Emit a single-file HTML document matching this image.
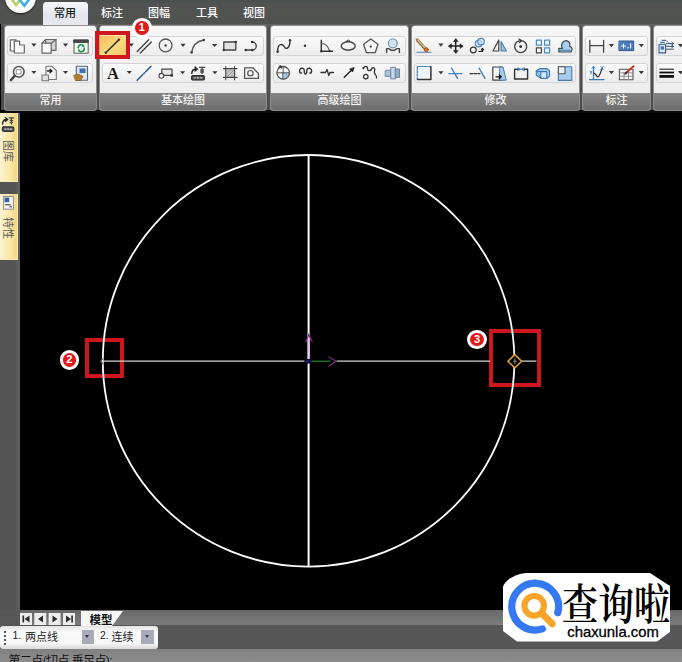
<!DOCTYPE html>
<html><head><meta charset="utf-8">
<style>
html,body{margin:0;padding:0;}
body{width:682px;height:662px;overflow:hidden;background:#000;position:relative;font-family:"Liberation Sans","Noto Sans CJK SC",sans-serif;}
.abs{position:absolute;}
#tabbar{left:0;top:0;width:682px;height:24px;background:linear-gradient(#4a504e,#515351 20%,#505250);}
#ribbon{left:0;top:24px;width:682px;height:86px;background:linear-gradient(#626262,#505050 4px,#4c4c4c);}
.tabtxt{position:absolute;top:6px;font-size:11px;font-weight:500;color:#fff;line-height:14px;white-space:nowrap;}
#acttab{left:43px;top:2px;width:45px;height:23px;background:linear-gradient(#f5f7fa,#e2e6ec 60%,#e6e9ee);border-radius:3.5px 3.5px 0 0;}
.panel{position:absolute;top:26px;height:83.5px;background:linear-gradient(#f6f6f6,#eeeeee 60%);border-radius:2.5px;overflow:hidden;box-shadow:0 0 0 1px #8c8c8c;}
.plabel{position:absolute;left:0;right:0;bottom:0;height:16.5px;background:linear-gradient(#848484,#6e6e6e);color:#f4f4f4;font-size:11px;font-weight:500;line-height:15.5px;text-align:center;}
.grp{position:absolute;height:18px;border:1px solid #d2d4d8;border-radius:3px;background:linear-gradient(#fafafa,#ececec);}
.r1{top:10px}.r2{top:37px}
svg{position:absolute;overflow:visible}
.dd{position:absolute;width:0;height:0;border-left:2.5px solid transparent;border-right:2.5px solid transparent;border-top:3px solid #444;}
.badge{position:absolute;width:13.6px;height:13.6px;border-radius:50%;background:#e0191b;border:3.1px solid #fff;color:#fff;font-size:11px;font-weight:bold;line-height:13.6px;text-align:center;}
.redbox{position:absolute;border:4px solid #cf161d;box-sizing:border-box;}
.sidetab{position:absolute;left:0;width:18px;background:linear-gradient(90deg,#fdf3d0,#fbe7a8 55%,#f5d47a);box-shadow:inset -1px -1px 0 #fbe9b4;}
.vtxt{position:absolute;font-size:11px;color:#5a5a5a;transform-origin:0 0;transform:rotate(90deg);white-space:nowrap;line-height:12px;}
</style></head><body>
<!-- top bars -->
<div id="tabbar" class="abs"></div>
<div id="ribbon" class="abs"></div>
<div class="abs" style="left:0;top:24px;width:1px;height:87px;background:#000"></div>
<div class="abs" style="left:0;top:110px;width:682px;height:3px;background:#0a0a0a"></div>
<!-- app button -->
<div class="abs" style="left:4.8px;top:-18.4px;width:31px;height:31px;border-radius:50%;background:radial-gradient(circle at 50% 55%,#fdfdfb 50%,#e9efe6 80%,#d6dcd8 100%);box-shadow:0 1px 2px #1a1a1a"></div>
<svg class="abs" style="left:8px;top:0" width="26" height="10" viewBox="0 0 26 10"><path d="M3.5 -1 L8 5 L12 -0.5" stroke="#b9d064" stroke-width="2.6" fill="none"/><path d="M11 -1 L16.3 5.6 L21.5 -1" stroke="#3faee0" stroke-width="2.6" fill="none"/></svg>
<div id="acttab" class="abs"></div>
<div class="tabtxt" style="left:54px;color:#222">常用</div>
<div class="tabtxt" style="left:101px">标注</div>
<div class="tabtxt" style="left:148px">图幅</div>
<div class="tabtxt" style="left:196px">工具</div>
<div class="tabtxt" style="left:243px">视图</div>

<!-- panels -->
<div class="panel" id="p1" style="left:5px;width:91px"><div class="grp r1" style="left:2px;width:84px"></div><div class="grp r2" style="left:2px;width:84px"></div><div class="plabel">常用</div></div>
<div class="panel" id="p2" style="left:100px;width:166px"><div class="grp r1" style="left:2px;width:160px"></div><div class="grp r2" style="left:2px;width:160px"></div><div class="plabel">基本绘图</div></div>
<div class="panel" id="p3" style="left:271px;width:137px"><div class="grp r1" style="left:2px;width:131px"></div><div class="grp r2" style="left:2px;width:131px"></div><div class="plabel">高级绘图</div></div>
<div class="panel" id="p4" style="left:412px;width:167px"><div class="grp r1" style="left:2px;width:160px"></div><div class="grp r2" style="left:2px;width:160px"></div><div class="plabel">修改</div></div>
<div class="panel" id="p5" style="left:583px;width:67px"><div class="grp r1" style="left:2px;width:61px"></div><div class="grp r2" style="left:2px;width:61px"></div><div class="plabel">标注</div></div>
<div class="panel" id="p6" style="left:654px;width:40px"><div class="grp r1" style="left:2px;width:50px"></div><div class="grp r2" style="left:2px;width:50px"></div><div class="plabel"></div></div>


<!-- icons -->
<svg class="abs" id="icons" style="left:0;top:0" width="682" height="112" viewBox="0 0 682 112" fill="none" stroke-linecap="round" stroke-linejoin="round">
<defs><linearGradient id="og" x1="0" y1="0" x2="1" y2="1"><stop offset="0" stop-color="#f6b95a"/><stop offset=".55" stop-color="#f9dc82"/><stop offset="1" stop-color="#f4c064"/></linearGradient></defs>
<!-- panel1 row1 -->
<g stroke="#666" stroke-width="1.2" fill="#fbfbfb">
<path d="M10.3 39.8 H16 V51 H10.3 Z"/>
<path d="M14.3 41.2 H19.6 V45 H24.3 V53 H14.3 Z"/>
<path d="M45.6 39.5 H56 V50.3 H45.6 Z" fill="#d4d4d4"/>
<path d="M42 43.2 H51.2 V53.2 H42 Z"/>
<path d="M42 43.2 L45.6 39.5 M51.2 43.2 L56 39.5" />
</g>
<rect x="74" y="40" width="14.2" height="13.2" fill="#f2f4f2" stroke="#666" stroke-width="1.1"/>
<rect x="74" y="40" width="14.2" height="2.4" fill="#444" stroke="#444" stroke-width="1"/>
<path d="M78.2 47.6 A3 3 0 0 1 83.6 46 M84.2 48.2 A3 3 0 0 1 78.8 50.4" stroke="#279a48" stroke-width="1.7"/><path d="M82.6 44.6 L84.6 46.6 L82 47 Z M79.6 51.8 L77.8 49.8 L80.4 49.4 Z" fill="#279a48" stroke="none"/>
<!-- panel1 row2 -->
<circle cx="18.8" cy="71.8" r="5.3" fill="#fafafa" stroke="#555" stroke-width="1.6"/>
<rect x="16.6" y="69.6" width="4.4" height="4.4" fill="#fff" stroke="#888" stroke-width=".9"/>
<path d="M14.6 76 L11 80" stroke="#444" stroke-width="2.6"/>
<g stroke="#777" stroke-width="1.1" fill="#f4f4f4">
<path d="M46 66.3 H52 L56.3 70.5 V79.5 H46 Z"/>
<path d="M42 75 H48.5 V80.8 H42 Z" fill="#e2e2e2"/>
</g>
<path d="M47.5 71 H51.5 M50 69.3 L52 71 L50 72.7" stroke="#222" stroke-width="1.3"/>
<rect x="76.3" y="66.2" width="11.2" height="14" fill="#dfe6ee" stroke="#55667a" stroke-width="1.1"/>
<rect x="79.5" y="68.5" width="6" height="4.5" fill="#3d6fb0" stroke="none"/>
<path d="M74 75.5 L78 74 L83 76.5 L80.5 80.5 L76 80.5 Z" fill="#b57a2c" stroke="#8a5a1c" stroke-width=".8"/>
<!-- panel2 row1 -->
<rect x="99.5" y="35.5" width="27.5" height="20" fill="url(#og)" stroke="none"/>
<path d="M105.8 52.8 L119 39.6" stroke="#3a3428" stroke-width="1.5"/>
<circle cx="105.8" cy="52.8" r="1.2" fill="#3a3428"/><circle cx="119" cy="39.6" r="1.2" fill="#3a3428"/>
<path d="M137.2 51.4 L148.7 39.8 M140.3 53 L151.3 41.9" stroke="#444" stroke-width="1.4"/>
<circle cx="165.6" cy="45.4" r="6.4" stroke="#555" stroke-width="1.3"/><circle cx="165.6" cy="45.4" r="1.2" fill="#333"/>
<path d="M191.6 52.4 Q193 42 203.8 40" stroke="#555" stroke-width="1.4"/>
<circle cx="191.6" cy="52.4" r="1.3" fill="#444"/><circle cx="203.8" cy="40" r="1.3" fill="#444"/>
<rect x="223.8" y="42" width="12" height="8" fill="#e4e4e4" stroke="#444" stroke-width="1.3"/>
<circle cx="235.8" cy="42" r="1.2" fill="#333"/><circle cx="223.8" cy="50" r="1.2" fill="#333"/>
<path d="M245.8 50 H252.5 A4 4 0 0 0 252 42" stroke="#444" stroke-width="1.4"/>
<circle cx="245.8" cy="50" r="1.3" fill="#333"/><circle cx="252.3" cy="50" r="1.3" fill="#333"/><circle cx="252" cy="42" r="1.2" fill="#333"/>
<!-- panel2 row2 -->
<text x="107" y="78.5" font-family="'Liberation Serif',serif" font-weight="bold" font-size="16.5" fill="#1a1a1a" stroke="none">A</text>
<path d="M137.2 80.2 L142.5 74.8 M143.6 73.7 L144.6 72.7 M145.7 71.6 L151 66.3" stroke="#2c5a88" stroke-width="1.5"/>
<rect x="161.8" y="69.2" width="10.2" height="6.2" fill="#e8e8e8" stroke="#444" stroke-width="1.2"/>
<circle cx="161.4" cy="75.8" r="2.4" fill="#f4f4f4" stroke="#444" stroke-width="1.1"/>
<rect x="170.6" y="74.3" width="2.4" height="2.4" fill="#333"/>
<path d="M191.8 73.5 Q191.8 69 196.5 69 M195 67 L197.3 69 L195 71" stroke="#222" stroke-width="1.4"/>
<path d="M199.5 67.3 H204.8 M202.1 67.3 V73.5 M200.7 70 H203.6 M200.7 72 H203.6" stroke="#444" stroke-width="1.3"/>
<rect x="191.5" y="75.5" width="13" height="4.6" rx="1" fill="#444" stroke="#333" stroke-width="1"/>
<path d="M194 77.8 H195.5 M197.2 77.8 H198.8 M200.5 77.8 H202" stroke="#ddd" stroke-width="1.2"/>
<rect x="225.8" y="68.6" width="8.8" height="8.8" fill="#c9c9c9" stroke="none"/>
<path d="M223.5 68.6 H237 M223.5 77.4 H237 M225.8 66.5 V79.8 M234.6 66.5 V79.8" stroke="#444" stroke-width="1.1"/>
<path d="M227 77 L234 70 M227 73.5 L231 69.5 M230.5 77 L234 73.5" stroke="#888" stroke-width=".8"/>
<path d="M244.6 67.8 H253 L258.4 73.5 V78.4 H244.6 Z" fill="#f6f6f6" stroke="#555" stroke-width="1.3"/>
<circle cx="250.4" cy="73.2" r="2.7" stroke="#555" stroke-width="1.2"/>
<path fill="#3a3a3a" stroke="none" d="M31.3 43.6 h5.2 l-2.6 3.1 z M62.9 43.6 h5.2 l-2.6 3.1 z M128.7 43.6 h5.2 l-2.6 3.1 z M180.4 43.8 h5.2 l-2.6 3.1 z M212.0 43.9 h5.2 l-2.6 3.1 z M438.3 43.6 h5.2 l-2.6 3.1 z M608.8 44.1 h5.2 l-2.6 3.1 z M638.7 44.1 h5.2 l-2.6 3.1 z M677.9 44.1 h5.2 l-2.6 3.1 z M31.3 70.9 h5.2 l-2.6 3.1 z M62.9 70.9 h5.2 l-2.6 3.1 z M126.7 71.0 h5.2 l-2.6 3.1 z M180.0 71.2 h5.2 l-2.6 3.1 z M212.3 71.2 h5.2 l-2.6 3.1 z M438.3 71.2 h5.2 l-2.6 3.1 z M608.8 71.1 h5.2 l-2.6 3.1 z M638.7 71.1 h5.2 l-2.6 3.1 z M677.9 71.1 h5.2 l-2.6 3.1 z"/>
<!-- panel3 row1 -->
<path d="M277.6 51.8 C277.6 42 283 44 284.5 47 C286 50 290 48 290 40.2" stroke="#333" stroke-width="1.4"/>
<circle cx="277.6" cy="51.8" r="1.2" fill="#333"/><circle cx="290" cy="40.2" r="1.2" fill="#333"/>
<circle cx="305" cy="45.8" r="1.2" fill="#333"/>
<path d="M321.3 40.3 V51.2 H332.4" stroke="#333" stroke-width="1.4"/>
<path d="M321.3 43.5 Q327.5 43.5 329.5 51" stroke="#555" stroke-width="1.1"/>
<circle cx="321.3" cy="51.2" r="1.2" fill="#333"/><circle cx="329.8" cy="51.2" r="1.1" fill="#333"/>
<ellipse cx="348.2" cy="46" rx="7" ry="4.2" stroke="#444" stroke-width="1.4"/>
<path d="M346.5 41 L348.2 40 L350 41" stroke="#444" stroke-width="1"/>
<path d="M370.8 39 L378 44.3 L375.2 52.7 H366.4 L363.6 44.3 Z" fill="#f6f6f6" stroke="#555" stroke-width="1.3"/>
<circle cx="370.8" cy="46.6" r="1.1" fill="#333"/>
<circle cx="392.8" cy="43.4" r="4.4" fill="#cfe2f3" stroke="#7d95ad" stroke-width="1.2"/>
<path d="M386.6 52.6 V48.6 H388.6 Q392.8 52.5 397 48.6 H399.4 V52.6" stroke="#444" stroke-width="1.4"/>
<!-- panel3 row2 -->
<circle cx="283.2" cy="72.8" r="6.3" fill="#f8f8f8" stroke="#555" stroke-width="1.3"/>
<path d="M283.2 72.8 H289.5 A6.3 6.3 0 0 1 283.2 79.1 Z" fill="#9cc4e4" stroke="#555" stroke-width="1"/>
<path d="M283.2 72.8 V66.5 M277 72.8 H283.2" stroke="#555" stroke-width="1"/>
<path d="M278.5 67.5 L281 66 M279 66 H281.3 V68.2" stroke="#333" stroke-width="1"/>
<path d="M299.6 71.5 C299 67.5 304.5 67 304.3 71 C304 75 306.8 75 306.8 71 C306.5 67 312 67.5 311.6 71.5 M299.6 71.5 Q300 73.5 301.5 73 M311.6 71.5 Q311.2 73.5 309.8 73" stroke="#333" stroke-width="1.4"/>
<path d="M321 72.5 H325.5 L327 69.5 L328.8 75.5 L330 72.5 H333.5" stroke="#333" stroke-width="1.3"/>
<path d="M344.2 77.2 L352.5 69.2" stroke="#222" stroke-width="1.4"/>
<path d="M354 67.8 L352.6 72 L349.8 69.2 Z" fill="#222" stroke="#222" stroke-width=".8"/>
<path d="M363.5 68.5 C364 65.5 368 66 367.5 68.5 C367 71 371 71.5 371.5 69 C372 66.5 376 68 374.5 71 C373 74 377.5 75 376.5 78" stroke="#333" stroke-width="1.3"/>
<circle cx="365.8" cy="76.6" r="2.3" stroke="#333" stroke-width="1.2"/><circle cx="363.3" cy="68" r="1" fill="#333"/>
<g stroke="#6d86a0" stroke-width="1">
<rect x="385.6" y="70.3" width="5.5" height="6" fill="#a9c3dc"/>
<rect x="391.1" y="67.3" width="4.4" height="11.6" fill="#c8d9ea"/>
<rect x="395.5" y="69" width="4" height="8.4" fill="#8fabc6"/>
</g>
<!-- panel4 row1 -->
<path d="M417.3 40 L426 49.5" stroke="#8a6a3a" stroke-width="3.2"/>
<path d="M417.6 39.8 L426 49" stroke="#d9c49a" stroke-width="1.2"/>
<circle cx="426.3" cy="49.7" r="2" fill="#e0701c" stroke="#a04a10" stroke-width=".8"/>
<path d="M417 52.3 H431" stroke="#5a7a9a" stroke-width="1.1"/>
<path d="M449.5 46 H462 M455.7 39.8 V52.2" stroke="#222" stroke-width="1.5"/>
<path d="M448.6 46 L451.4 43.8 V48.2 Z M462.9 46 L460.1 43.8 V48.2 Z M455.7 38.8 L453.5 41.6 H457.9 Z M455.7 53.2 L453.5 50.4 H457.9 Z" fill="#222" stroke="#222" stroke-width=".6"/>
<circle cx="478.6" cy="43.6" r="3.3" fill="#d6e8f7" stroke="#4a8ac4" stroke-width="1.2"/>
<circle cx="481" cy="41.6" r="3.3" fill="#d6e8f7" fill-opacity=".6" stroke="#4a8ac4" stroke-width="1.2"/>
<circle cx="473.3" cy="50" r="2.9" fill="#f4f4f4" stroke="#333" stroke-width="1.2"/>
<path d="M479 51.5 H482.5 V48.8 M481.3 49.8 L482.5 48.4 L483.7 49.8" stroke="#222" stroke-width="1.2"/>
<path d="M498.8 40 V51 H493 Z" fill="#f2f2f2" stroke="#444" stroke-width="1.2"/>
<path d="M501 41.5 V51 H506.4 Z" fill="#9cc4e4" stroke="#4a7aa8" stroke-width="1.1"/>
<circle cx="520.7" cy="46.6" r="6" stroke="#444" stroke-width="1.4"/>
<circle cx="520.7" cy="46.6" r="1.4" fill="#222"/>
<path d="M518.8 39 L521.6 40.5 L519.6 42.6" stroke="#333" stroke-width="1.1"/>
<g stroke-width="1.2" fill="#f3f7fb">
<rect x="536.4" y="40.2" width="5" height="5" stroke="#4a8ac4"/><rect x="544.6" y="40.2" width="5" height="5" stroke="#4a8ac4"/>
<rect x="536.4" y="47.8" width="5" height="5" stroke="#444"/><rect x="544.6" y="47.8" width="5" height="5" stroke="#4a8ac4"/>
</g>
<path d="M558.8 52 V48.3 H562.5 C560 44 563.5 40.6 566 40.6 C568.5 40.6 571 43.5 569.6 46.3 C572 46.5 573 50 571 52 Z" fill="#a9cdea" stroke="#3a4a5a" stroke-width="1.2"/>
<path d="M559 50.3 H570" stroke="#4a7aa8" stroke-width="1"/>
<!-- panel4 row2 -->
<rect x="417.3" y="66.5" width="13.6" height="13" rx="1" fill="#eef4fa" stroke="none"/>
<path d="M417.3 79.5 V66.5 H430.9" stroke="#3a7ab8" stroke-width="1.2" stroke-dasharray="2 1.4"/>
<path d="M430.9 66.8 V79.5 H417.6" stroke="#333" stroke-width="1.5"/>
<path d="M448.8 73.6 H463" stroke="#3a7ab8" stroke-width="1.1" stroke-dasharray="2.4 1.2"/>
<path d="M451.5 68 L457.5 78.3" stroke="#3a7ab8" stroke-width="1.3"/>
<path d="M470 73.6 H480" stroke="#333" stroke-width="1.2" stroke-dasharray="3 1.2"/>
<path d="M479 68 L485 78.3" stroke="#3a7ab8" stroke-width="1.3"/>
<path d="M492.8 67 H502.5 V80.2 H492.8 Z" fill="#f6f6f6" stroke="#444" stroke-width="1.2"/>
<path d="M500 67 H503 L506.2 80.2 H500 Z" fill="#a9cdea" stroke="#4a7aa8" stroke-width="1"/>
<path d="M496 76.8 H501 M499.3 75 L501.3 76.8 L499.3 78.6" stroke="#111" stroke-width="1.3"/>
<path d="M518 69.3 H514.6 V79 H527.6 V69.3 H524.3" stroke="#333" stroke-width="1.4"/>
<path d="M518 68 L520.6 69.3 L518 70.6 M524.3 68 L521.7 69.3 L524.3 70.6" stroke="#3a7ab8" stroke-width="1.1"/>
<g stroke="#3a7ab8" stroke-width="1.1" fill="#a9cdea">
<path d="M536.3 71 L539.5 68.6 H547 L549.6 71 V76 L547 78.3 H541 Z"/>
<rect x="540.8" y="71.6" width="6" height="6.6" fill="#d6e8f7"/>
<path d="M536.3 71 V75.3 L540.8 78 M536.3 71 L540.8 71.6"/>
</g>
<rect x="558.4" y="66.8" width="13.4" height="13.6" fill="#a9cdea" stroke="#4a7aa8" stroke-width="1.1"/>
<rect x="558.4" y="66.8" width="6.6" height="7" fill="#e8f0f8" stroke="#555" stroke-width="1.1"/>
<!-- panel5 -->
<path d="M589.8 40.3 V52.2 M603.6 40.3 V52.2 M589.8 45.6 H603.6" stroke="#444" stroke-width="1.3"/>
<rect x="619.3" y="41" width="14.4" height="9.6" fill="#4a7ab8" stroke="#2f5a94" stroke-width="1"/>
<path d="M621.5 46 H625.5 M623.5 44 V48 M627.5 47.8 H628.4 M630.6 43.8 V48" stroke="#f4f8fc" stroke-width="1.1"/>
<path d="M593.5 66.6 V79.6 M589.6 79.6 H604" stroke="#3a7ab8" stroke-width="1.2"/>
<path d="M593.5 73 C596 73 597 79 599 76 C600.5 73.5 601 71 602 69" stroke="#222" stroke-width="1.2"/>
<path d="M592 68.3 L593.5 66.4 L595 68.3 M600.8 66.6 L603.2 69.6 M603.2 66.6 L600.8 69.6 M590 71 L591 72.4 V74 M592 71 L591 72.4" stroke="#3a7ab8" stroke-width=".9"/>
<rect x="619.4" y="69.2" width="13.6" height="10.6" fill="#f2f2f2" stroke="#555" stroke-width="1.1"/>
<path d="M619.4 72.8 H633 M619.4 76.3 H633 M624 72.8 V79.8 M628.5 72.8 V79.8" stroke="#888" stroke-width=".9"/>
<path d="M625.8 73.2 L633.5 66.2" stroke="#c0392b" stroke-width="2"/>
<path d="M625 74 L626.8 72.3" stroke="#333" stroke-width="1.6"/>
<!-- panel6 -->
<rect x="659" y="44.3" width="6.6" height="8.6" fill="#dbe8f4" stroke="#3a5a80" stroke-width="1.1"/>
<rect x="660.8" y="46.3" width="3" height="3.4" fill="#3a6aa8" stroke="none"/>
<path d="M660.5 42.3 H664.5 M662 40.3 H666 L668 42.3" stroke="#3a5a80" stroke-width="1"/>
<path d="M666.5 43.6 H673.5 M666.5 46.4 H673.5 M666.5 49.2 H673.5 M671.8 42.2 L673.5 43.6 L671.8 45 M671.8 45 L673.5 46.4 L671.8 47.8" stroke="#3a5a80" stroke-width="1"/>
<path d="M659.4 69.2 H674" stroke="#111" stroke-width="1" stroke-linecap="butt"/>
<path d="M659.4 72.5 H674" stroke="#111" stroke-width="1.8" stroke-linecap="butt"/>
<path d="M659.4 76.4 H674" stroke="#111" stroke-width="2.8" stroke-linecap="butt"/>
</svg>
<!-- left strip -->
<div class="abs" style="left:0;top:113px;width:20px;height:497px;background:linear-gradient(90deg,#555 16px,#5e5e5e 17px)"></div>
<div class="sidetab" style="top:113px;height:69px"></div>
<div class="sidetab" style="top:194px;height:66px"></div>
<div class="vtxt" style="left:13.7px;top:139.5px">图库</div>
<div class="vtxt" style="left:14px;top:216.5px">特性</div>

<svg class="abs" style="left:0;top:113px" width="20" height="100" viewBox="0 113 20 100" fill="none" stroke-linecap="round">
<path d="M2.6 124 Q2.6 119.5 6.8 119.5 M5.4 117.6 L7.6 119.5 L5.4 121.4" stroke="#222" stroke-width="1.3"/>
<path d="M9 117.8 H13.8 M11.4 117.8 V124 M10.2 120.4 H12.6 M10.2 122.3 H12.6" stroke="#444" stroke-width="1.2"/>
<rect x="2.3" y="126.8" width="11.6" height="4.6" rx="1" fill="#444" stroke="#333" stroke-width="1"/>
<path d="M4.5 129.1 H6 M7.4 129.1 H8.9 M10.3 129.1 H11.8" stroke="#ddd" stroke-width="1.1"/>
<rect x="3.6" y="196.4" width="9.8" height="12.8" fill="#f4f4f4" stroke="#8a8a8a" stroke-width="1"/>
<rect x="4.6" y="197.6" width="4.6" height="4.6" fill="#3a5cb0" stroke="none"/>
<path d="M5.5 204.8 H10.5 M10 206.8 H11.6" stroke="#333" stroke-width="1"/>
</svg>
<!-- drawing -->
<div class="redbox" style="left:85px;top:338px;width:39px;height:40px"></div>
<div class="redbox" style="left:489px;top:329px;width:52px;height:58px"></div>

<svg class="abs" style="left:0;top:0" width="682" height="662" viewBox="0 0 682 662">
<circle cx="308.6" cy="360.8" r="205.8" fill="none" stroke="#fff" stroke-width="1.8"/>
<line x1="308.6" y1="155" x2="308.6" y2="566.5" stroke="#fff" stroke-width="2"/>
<path d="M103.3 358.3 L100.6 361.2 L103.3 364.2" stroke="#6a6a6a" stroke-width="1.1" fill="none"/><path d="M103 361.2 H490 M521 361.2 H536.5" stroke="#d4d4d4" stroke-width="1.2" fill="none"/>
<rect x="304.5" y="359" width="32" height="4.5" fill="#000"/>
<line x1="308.7" y1="334" x2="308.7" y2="358.5" stroke="#e6c4ea" stroke-width="2.2"/>
<path d="M305.8 342 L308.7 334.6 L312.4 342" stroke="#8a2c90" stroke-width="1.3" fill="none"/>
<path d="M311.7 361.3 H330.5" stroke="#1f6a22" stroke-width="1.6" fill="none"/>
<path d="M328.5 356.8 L336 361.3 L328.5 366.2" stroke="#7a2a80" stroke-width="1.3" fill="none"/>
<rect x="305.5" y="359.5" width="6" height="3.6" fill="#14145a"/>
<path d="M514.8 354.6 L521.6 361.2 L514.8 367.8 L508 361.2 Z" fill="#000" stroke="#dc9c3c" stroke-width="1.6"/><path d="M514.8 358.5 V364 M513 361.2 H517" stroke="#8a8a70" stroke-width="1" fill="none"/>
</svg>
<div class="redbox" style="left:95.2px;top:30.6px;width:35.2px;height:28.8px"></div>
<div class="badge" style="left:132.1px;top:18.4px">1</div>
<div class="badge" style="left:59.5px;top:350.3px">2</div>
<div class="badge" style="left:467.3px;top:329.9px">3</div>

<!-- bottom -->
<div class="abs" style="left:0;top:610px;width:682px;height:16px;background:linear-gradient(#686868,#7e7e7e)"></div>
<div class="abs" style="left:0;top:610px;width:20px;height:16px;background:#575757"></div>
<div class="abs" style="left:0;top:625px;width:682px;height:24px;background:#565656"></div>
<div class="abs" style="left:0;top:649px;width:682px;height:13px;background:linear-gradient(#808080,#8e8e8e)"></div>
<svg class="abs" style="left:0;top:608px" width="160" height="20" viewBox="0 608 160 20">
<g fill="#ececec"><rect x="20" y="613" width="12" height="12"/><rect x="34.3" y="613" width="12" height="12"/><rect x="48.6" y="613" width="12" height="12"/><rect x="63" y="613" width="12" height="12"/></g>
<g fill="#2a2a2a"><rect x="22.5" y="615.5" width="1.6" height="7"/><path d="M29.5 615.5 V622.5 L24.5 619 Z"/><path d="M43 615.5 V622.5 L38 619 Z"/><path d="M52.5 615.5 V622.5 L57.5 619 Z"/><path d="M66 615.5 V622.5 L71 619 Z"/><rect x="71.3" y="615.5" width="1.6" height="7"/></g>
<path d="M81 626 V611 H123 L112 626 Z" fill="#f6f6f6"/>
</svg>
<div class="abs" style="left:89.5px;top:612.5px;font-size:11.5px;font-weight:bold;color:#111;line-height:14px;white-space:nowrap;height:13px;overflow:hidden">模型</div>
<div class="abs" style="left:0;top:625.5px;width:158px;height:23.5px;background:linear-gradient(#e4e4e4,#fbfbfb 30%,#f6f6f6 75%,#d9d9d9);border-radius:3px"></div>
<div class="abs" style="left:4px;top:631px;width:2px;height:2px;background:#555;box-shadow:0 4px 0 #555,0 8px 0 #555,0 12px 0 #555"></div>
<div class="abs" style="left:12.5px;top:627.5px;font-size:10.5px;color:#222;line-height:14px">1.</div>
<div class="abs" style="left:25px;top:630px;font-size:11px;color:#222;line-height:14px;white-space:nowrap">两点线</div>
<div class="abs" style="left:81.5px;top:630px;width:12px;height:14px;background:#a9abb8"></div>
<div class="dd" style="left:85px;top:635px;border-top-color:#3a3a50"></div>
<div class="abs" style="left:100px;top:627.5px;font-size:10.5px;color:#222;line-height:14px">2.</div>
<div class="abs" style="left:111.5px;top:630px;font-size:11px;color:#222;line-height:14px;white-space:nowrap">连续</div>
<div class="abs" style="left:141px;top:630px;width:12.5px;height:14px;background:#a9abb8"></div>
<div class="dd" style="left:145px;top:635px;border-top-color:#3a3a50"></div>
<div class="abs" style="left:8.5px;top:654px;font-size:12px;color:#111;line-height:14px;white-space:nowrap;letter-spacing:-0.6px">第二点(切点,垂足点):</div>
<!-- logo -->
<svg class="abs" style="left:0;top:0" width="682" height="662" viewBox="0 0 682 662">
<path d="M503 587 Q505 579 520 574 L526 573 L650 573 L670 586 L670 632 L657 641.5 L517 641.5 L503 631 Z" fill="#fff"/>
<path d="M557.8 612.7 A23.4 23.4 0 1 0 542.4 628.9" fill="none" stroke="#3478f2" stroke-width="7.2" stroke-linecap="round"/>
<circle cx="534.2" cy="605.8" r="9.8" fill="none" stroke="#f7a428" stroke-width="6.1"/>
<path d="M542.5 614 L552.3 623.8" stroke="#f7a428" stroke-width="6.8" stroke-linecap="round"/>
<text x="562" y="619.5" font-family="'Liberation Serif','Noto Serif CJK SC',serif" font-size="43" font-weight="600" fill="#000" textLength="108" lengthAdjust="spacingAndGlyphs">查询啦</text>
<text x="567.3" y="637" font-family="'Liberation Sans',sans-serif" font-size="14.5" fill="#000" stroke="#000" stroke-width="0.3" textLength="91.5" lengthAdjust="spacingAndGlyphs">chaxunla.com</text>
</svg>
</body></html>
